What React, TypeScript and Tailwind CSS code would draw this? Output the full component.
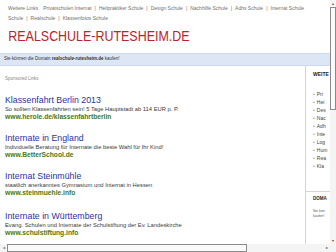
const topLinks = [
  "Privatschulen Internat",
  "Heilpraktiker Schule",
  "Design Schule",
  "Nachhilfe Schule",
  "Adhs Schule",
  "Internat Schule",
];

const topLinks2 = ["Schule", "Realschule", "Klassenfotos Schule"];

const ads = [
  {
    title: "Klassenfahrt Berlin 2013",
    text: "So sollten Klassenfahrten sein! 5 Tage Hauptstadt ab 114 EUR p. P.",
    url: "www.herole.de/klassenfahrtberlin",
  },
  {
    title: "Internate in England",
    text: "Individuelle Beratung für Internate die beste Wahl für Ihr Kind!",
    url: "www.BetterSchool.de",
  },
  {
    title: "Internat Steinmühle",
    text: "staatlich anerkanntes Gymnasium und Internat in Hessen",
    url: "www.steinmuehle.info",
  },
  {
    title: "Internate in Württemberg",
    text: "Evang. Schulen und Internate der Schulstiftung der Ev. Landeskirche",
    url: "www.schulstiftung.info",
  },
];

const sideLinks = ["Pri", "Hei", "Des", "Nac", "Adh", "Inte", "Log", "Hum", "Rea", "Kla"];

function Separated({ items }: { items: string[] }) {
  return (
    <>
      {items.map((item, i) => (
        <span key={item + i}>
          {i > 0 && <span className="mx-[3px]">|</span>}
          {item}
        </span>
      ))}
    </>
  );
}

export default function App() {
  return (
    <div className="flex h-[252px] w-[336px] flex-col overflow-hidden bg-white font-['Liberation_Sans',Arial,sans-serif]">
      <div className="flex min-h-0 flex-1">
        <div className="flex w-[330px] flex-col overflow-hidden">
          {/* top link bar */}
          <div className="px-[8px] pt-[3px] text-[5px] leading-[10px] text-[#6f6f6f] whitespace-nowrap">
            <div>
              <span className="mr-[5px]">Weitere Links</span>
              <Separated items={topLinks} />
            </div>
            <div>
              <Separated items={topLinks2} />
            </div>
          </div>

          <h1 className="mt-[5px] origin-left scale-x-[0.83] pl-[10px] text-[15px] leading-[16px] whitespace-nowrap text-[#b8252b]">
            REALSCHULE-RUTESHEIM.DE
          </h1>

          <div className="mt-[9px] flex h-[13px] items-center border-y border-[#cfd9ee] bg-[#dde6f5] px-[4px] text-[4.5px] text-[#333] whitespace-nowrap">
            Sie können die Domain&nbsp;<b>realschule-rutesheim.de</b>&nbsp;kaufen!
          </div>

          <div className="flex min-h-0 flex-1">
            <main className="w-[305px] px-[5px] pt-[10px]">
              <div className="text-[4.5px] leading-[6px] text-[#888]">Sponsored Links</div>
              <div className="mt-[13px] flex flex-col gap-[12px]">
                {ads.map((ad, i) => (
                  <div key={ad.title} className={i === 3 ? "mt-[2px] whitespace-nowrap" : "whitespace-nowrap"}>
                    <div className="text-[8.8px] leading-[10px] text-[#2e3398]">{ad.title}</div>
                    <div className="text-[5.8px] leading-[8px] text-[#3a3a3a]">{ad.text}</div>
                    <div className="text-[6.7px] leading-[8px] font-bold text-[#3f7a1c]">{ad.url}</div>
                  </div>
                ))}
              </div>
            </main>

            <aside className="flex-1 overflow-hidden border-l border-[#d4d4d4] text-[#444] whitespace-nowrap">
              <div className="pl-[7px] pt-[5px] text-[5px] font-bold leading-[6px] text-[#222]">WEITE</div>
              <ul className="mt-[13px] pl-[7px] text-[5px] leading-[8px]">
                {sideLinks.map((l) => (
                  <li key={l}>
                    <span className="mr-[2px] text-[#999]">•</span>
                    {l}
                  </li>
                ))}
              </ul>
              <div className="mt-[21px] border-t border-[#d4d4d4] pl-[7px] pt-[4px] text-[4.5px] font-bold leading-[5px] text-[#222]">
                DOMA
              </div>
              <div className="mt-[8px] pl-[7px] text-[3.5px] leading-[5px] text-[#555]">
                <div>Sie kön</div>
                <div>kaufen!</div>
              </div>
            </aside>
          </div>
        </div>

        {/* vertical scrollbar */}
        <div className="flex w-[6px] flex-col bg-[#f4f4f4]">
          <div className="flex h-[7px] items-center justify-center text-[4px] leading-none text-[#555]">▴</div>
          <div className="h-[103px] border border-[#8a8a8a] bg-[#fafafa]" />
          <div className="flex-1" />
          <div className="flex h-[7px] items-center justify-center text-[4px] leading-none text-[#555]">▾</div>
        </div>
      </div>

      {/* horizontal scrollbar */}
      <div className="flex h-[8px] bg-[#f4f4f4]">
        <div className="flex w-[7px] items-center justify-center text-[4px] leading-none text-[#555]">◂</div>
        <div className="w-[240px] border border-[#8a8a8a] bg-[#fafafa]" />
        <div className="flex-1" />
        <div className="flex w-[7px] items-center justify-center text-[4px] leading-none text-[#555]">▸</div>
        <div className="w-[6px]" />
      </div>
    </div>
  );
}
